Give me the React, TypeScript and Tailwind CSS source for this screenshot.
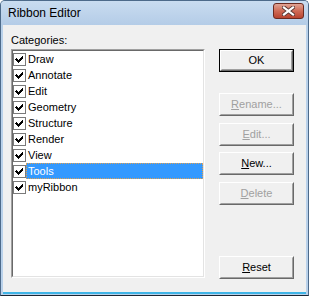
import React from "react";

const items = ["Draw", "Annotate", "Edit", "Geometry", "Structure", "Render", "View", "Tools", "myRibbon"];

function Check() {
  return (
    <div className="w-[13px] h-[13px] border border-[#7a7a7a] bg-white flex items-center justify-center shrink-0">
      <svg width="11" height="11" viewBox="0 0 11 11" shapeRendering="crispEdges">
        <path d="M2 4h1v1h1v1h1v-1h1v-1h1v-1h1v-1h1v3h-1v1h-1v1h-1v1h-1v1h-1v-1h-1v-1h-1v-1h-1z" fill="#000" />
      </svg>
    </div>
  );
}

function Btn({ label, u, disabled, def, mt }: { label: string; u?: number; disabled?: boolean; def?: boolean; mt: string }) {
  const text =
    u === undefined ? (
      label
    ) : (
      <>
        {label.slice(0, u)}
        <span className="underline underline-offset-[1px]">{label[u]}</span>
        {label.slice(u + 1)}
      </>
    );
  const inner = (
    <div className="flex-1 flex border border-t-white border-l-white border-r-[#696969] border-b-[#696969]">
      <div
        className={`flex-1 flex items-center justify-center border border-t-[#f0f0f0] border-l-[#f0f0f0] border-r-[#a0a0a0] border-b-[#a0a0a0] text-[11px] leading-none ${
          disabled ? "text-[#a0a0a0]" : "text-black"
        }`}
      >
        {text}
      </div>
    </div>
  );
  return (
    <div className={`w-[75px] h-[23px] flex bg-[#f0f0f0] ${mt} ${def ? "border border-black" : ""}`}>{inner}</div>
  );
}

export default function App() {
  return (
    <div
      className="w-[309px] h-[296px] flex flex-col bg-[#b9d1ea] border border-[#4d6a8a] border-b-[#1a2633] rounded-t-[5px] overflow-hidden"
      style={{ fontFamily: '"Liberation Sans", Arial, sans-serif' }}
    >
      <div className="h-[24px] shrink-0 flex items-center justify-between pl-[7px] pr-[4px] bg-gradient-to-b from-[#c9dcf0] to-[#b4cce7]">
        <span className="text-[12px] text-black leading-none">Ribbon Editor</span>
        <div className="w-[31px] h-[16px] mt-[-4px] rounded-[3px] border border-[#6b2a20] bg-gradient-to-b from-[#e0a394] via-[#cf6a55] to-[#b8432f] flex items-center justify-center">
          <svg width="13" height="10" viewBox="0 0 13 10">
            <path d="M2 1.5 L11 8.5 M11 1.5 L2 8.5" stroke="#5a3a36" strokeWidth="4" strokeLinecap="square" />
            <path d="M2 1.5 L11 8.5 M11 1.5 L2 8.5" stroke="#ffffff" strokeWidth="2.2" strokeLinecap="square" />
          </svg>
        </div>
      </div>
      <div className="flex-1 flex px-[2px] pr-[2px] pb-[1px]">
        <div className="flex-1 flex bg-[#f0f0f0] border-b-2 border-b-[#3fb4e6] pl-[8px] pt-[6px] gap-[14px]">
          <div className="w-[194px] flex flex-col">
            <div className="h-[18px] text-[11px] leading-[18px] text-black">Categories:</div>
            <div className="h-[229px] flex border border-t-[#a0a0a0] border-l-[#a0a0a0] border-r-white border-b-white">
              <div className="flex-1 flex flex-col bg-white border border-t-[#696969] border-l-[#696969] border-r-[#e3e3e3] border-b-[#e3e3e3]">
                {items.map((it) => {
                  const sel = it === "Tools";
                  return (
                    <div key={it} className="h-[16px] flex items-center">
                      <Check />
                      <div
                        className={`flex-1 h-[16px] pl-[1px] flex items-center text-[11px] leading-none ${
                          sel ? "bg-[#3399ff] text-white border border-dotted border-[#e0a050]" : "text-black border border-transparent"
                        }`}
                      >
                        {it}
                      </div>
                    </div>
                  );
                })}
              </div>
            </div>
          </div>
          <div className="w-[75px] flex flex-col">
            <Btn label="OK" def mt="mt-[18px]" />
            <Btn label="Rename..." u={0} disabled mt="mt-[21px]" />
            <Btn label="Edit..." u={0} disabled mt="mt-[7px]" />
            <Btn label="New..." u={0} mt="mt-[6px]" />
            <Btn label="Delete" u={0} disabled mt="mt-[7px]" />
            <Btn label="Reset" u={0} mt="mt-[51px]" />
          </div>
        </div>
      </div>
    </div>
  );
}
